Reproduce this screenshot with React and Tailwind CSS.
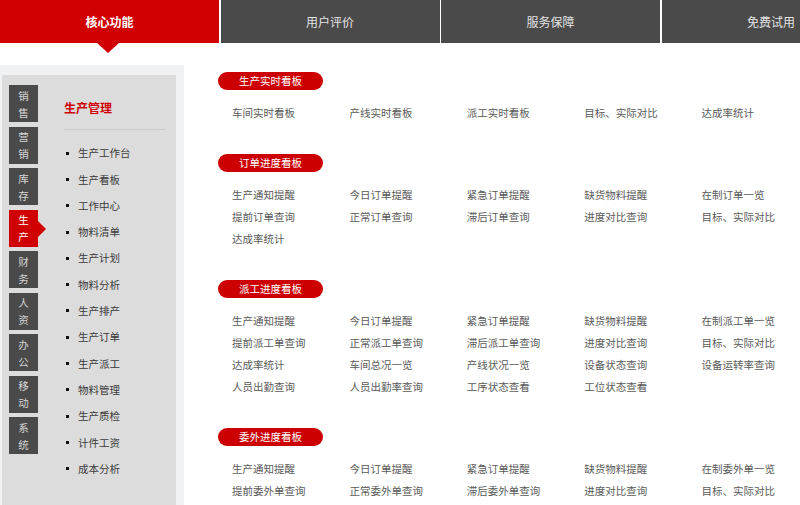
import React from "react";

const navTabs = ["核心功能", "用户评价", "服务保障", "免费试用"];
const sideTabs = ["销售", "营销", "库存", "生产", "财务", "人资", "办公", "移动", "系统"];
const menuItems = [
  "生产工作台", "生产看板", "工作中心", "物料清单", "生产计划", "物料分析", "生产排产",
  "生产订单", "生产派工", "物料管理", "生产质检", "计件工资", "成本分析",
];
const sections = [
  {
    title: "生产实时看板",
    items: ["车间实时看板", "产线实时看板", "派工实时看板", "目标、实际对比", "达成率统计"],
  },
  {
    title: "订单进度看板",
    items: [
      "生产通知提醒", "今日订单提醒", "紧急订单提醒", "缺货物料提醒", "在制订单一览",
      "提前订单查询", "正常订单查询", "滞后订单查询", "进度对比查询", "目标、实际对比",
      "达成率统计",
    ],
  },
  {
    title: "派工进度看板",
    items: [
      "生产通知提醒", "今日订单提醒", "紧急订单提醒", "缺货物料提醒", "在制派工单一览",
      "提前派工单查询", "正常派工单查询", "滞后派工单查询", "进度对比查询", "目标、实际对比",
      "达成率统计", "车间总况一览", "产线状况一览", "设备状态查询", "设备运转率查询",
      "人员出勤查询", "人员出勤率查询", "工序状态查看", "工位状态查看",
    ],
  },
  {
    title: "委外进度看板",
    items: [
      "生产通知提醒", "今日订单提醒", "紧急订单提醒", "缺货物料提醒", "在制委外单一览",
      "提前委外单查询", "正常委外单查询", "滞后委外单查询", "进度对比查询", "目标、实际对比",
    ],
  },
];

export default function App() {
  return (
    <div
      className="w-[800px] h-[505px] overflow-hidden bg-white flex flex-col"
      style={{ fontFamily: '"Microsoft YaHei", "Noto Sans CJK SC", "Noto Sans", sans-serif' }}
    >
      {/* top nav */}
      <div className="flex gap-[1.5px] h-[43px] shrink-0">
        {navTabs.map((t, i) => (
          <div
            key={t}
            className={
              i === 0
                ? "relative w-[219px] shrink-0 bg-[#d10000] text-white font-bold text-[12px] flex items-center justify-center"
                : "w-[219px] shrink-0 bg-[#4a4a4a] text-[#e4e4e4] text-[12px] flex items-center justify-center"
            }
          >
            {t}
            {i === 0 && (
              <div className="absolute left-[97px] top-[43px] w-0 h-0 border-l-[11px] border-r-[11px] border-t-[10px] border-l-transparent border-r-transparent border-t-[#d10000]" />
            )}
          </div>
        ))}
      </div>

      <div className="flex flex-1 min-h-0">
        {/* sidebar */}
        <div className="w-[184px] shrink-0 mt-[22px] bg-[#f1f2f4] pt-[10px] pl-[2px] flex">
          <div className="w-[174px] bg-[#dcdcdc] flex">
            <div className="pl-[7px] pt-[10px] flex flex-col gap-[4.5px]">
              {sideTabs.map((t) => {
                const active = t === "生产";
                return (
                  <div
                    key={t}
                    className={
                      "relative w-[29px] h-[37px] flex flex-col items-center justify-center text-[10.5px] leading-[17px] " +
                      (active ? "bg-[#d10000] text-white" : "bg-[#4a4a4a] text-[#d6d6d6]")
                    }
                  >
                    <span>{t[0]}</span>
                    <span>{t[1]}</span>
                    {active && (
                      <div className="absolute left-[29px] top-[11px] w-0 h-0 border-t-[8px] border-b-[8px] border-l-[8px] border-t-transparent border-b-transparent border-l-[#d10000]" />
                    )}
                  </div>
                );
              })}
            </div>
            <div className="ml-[26px] w-[101px] pt-[25px] flex flex-col">
              <div className="text-[12px] font-bold leading-[16px] text-[#d10000]">生产管理</div>
              <div className="mt-[13px] h-px bg-[#cbcbcb]" />
              <div className="mt-[10px] flex flex-col">
                {menuItems.map((m) => (
                  <div key={m} className="h-[26.3px] flex items-center text-[10.5px] text-[#3a3a3a]">
                    <span className="ml-[2px] w-[3px] h-[3px] bg-[#111] shrink-0" />
                    <span className="ml-[9px]">{m}</span>
                  </div>
                ))}
              </div>
            </div>
          </div>
        </div>

        {/* content */}
        <div className="ml-[34px] pt-[29px] flex flex-col">
          {sections.map((s) => (
            <div key={s.title} className="mb-[30px]">
              <div className="w-[105px] h-[18px] rounded-full bg-[#cc0000] text-white text-[10.5px] flex items-center justify-center">
                {s.title}
              </div>
              <div className="ml-[14px] mt-[12px] grid grid-cols-[repeat(5,117.4px)]">
                {s.items.map((it, idx) => (
                  <div key={idx} className="h-[22px] leading-[22px] text-[10.5px] text-[#5a5a5a] whitespace-nowrap">
                    {it}
                  </div>
                ))}
              </div>
            </div>
          ))}
        </div>
      </div>
    </div>
  );
}
